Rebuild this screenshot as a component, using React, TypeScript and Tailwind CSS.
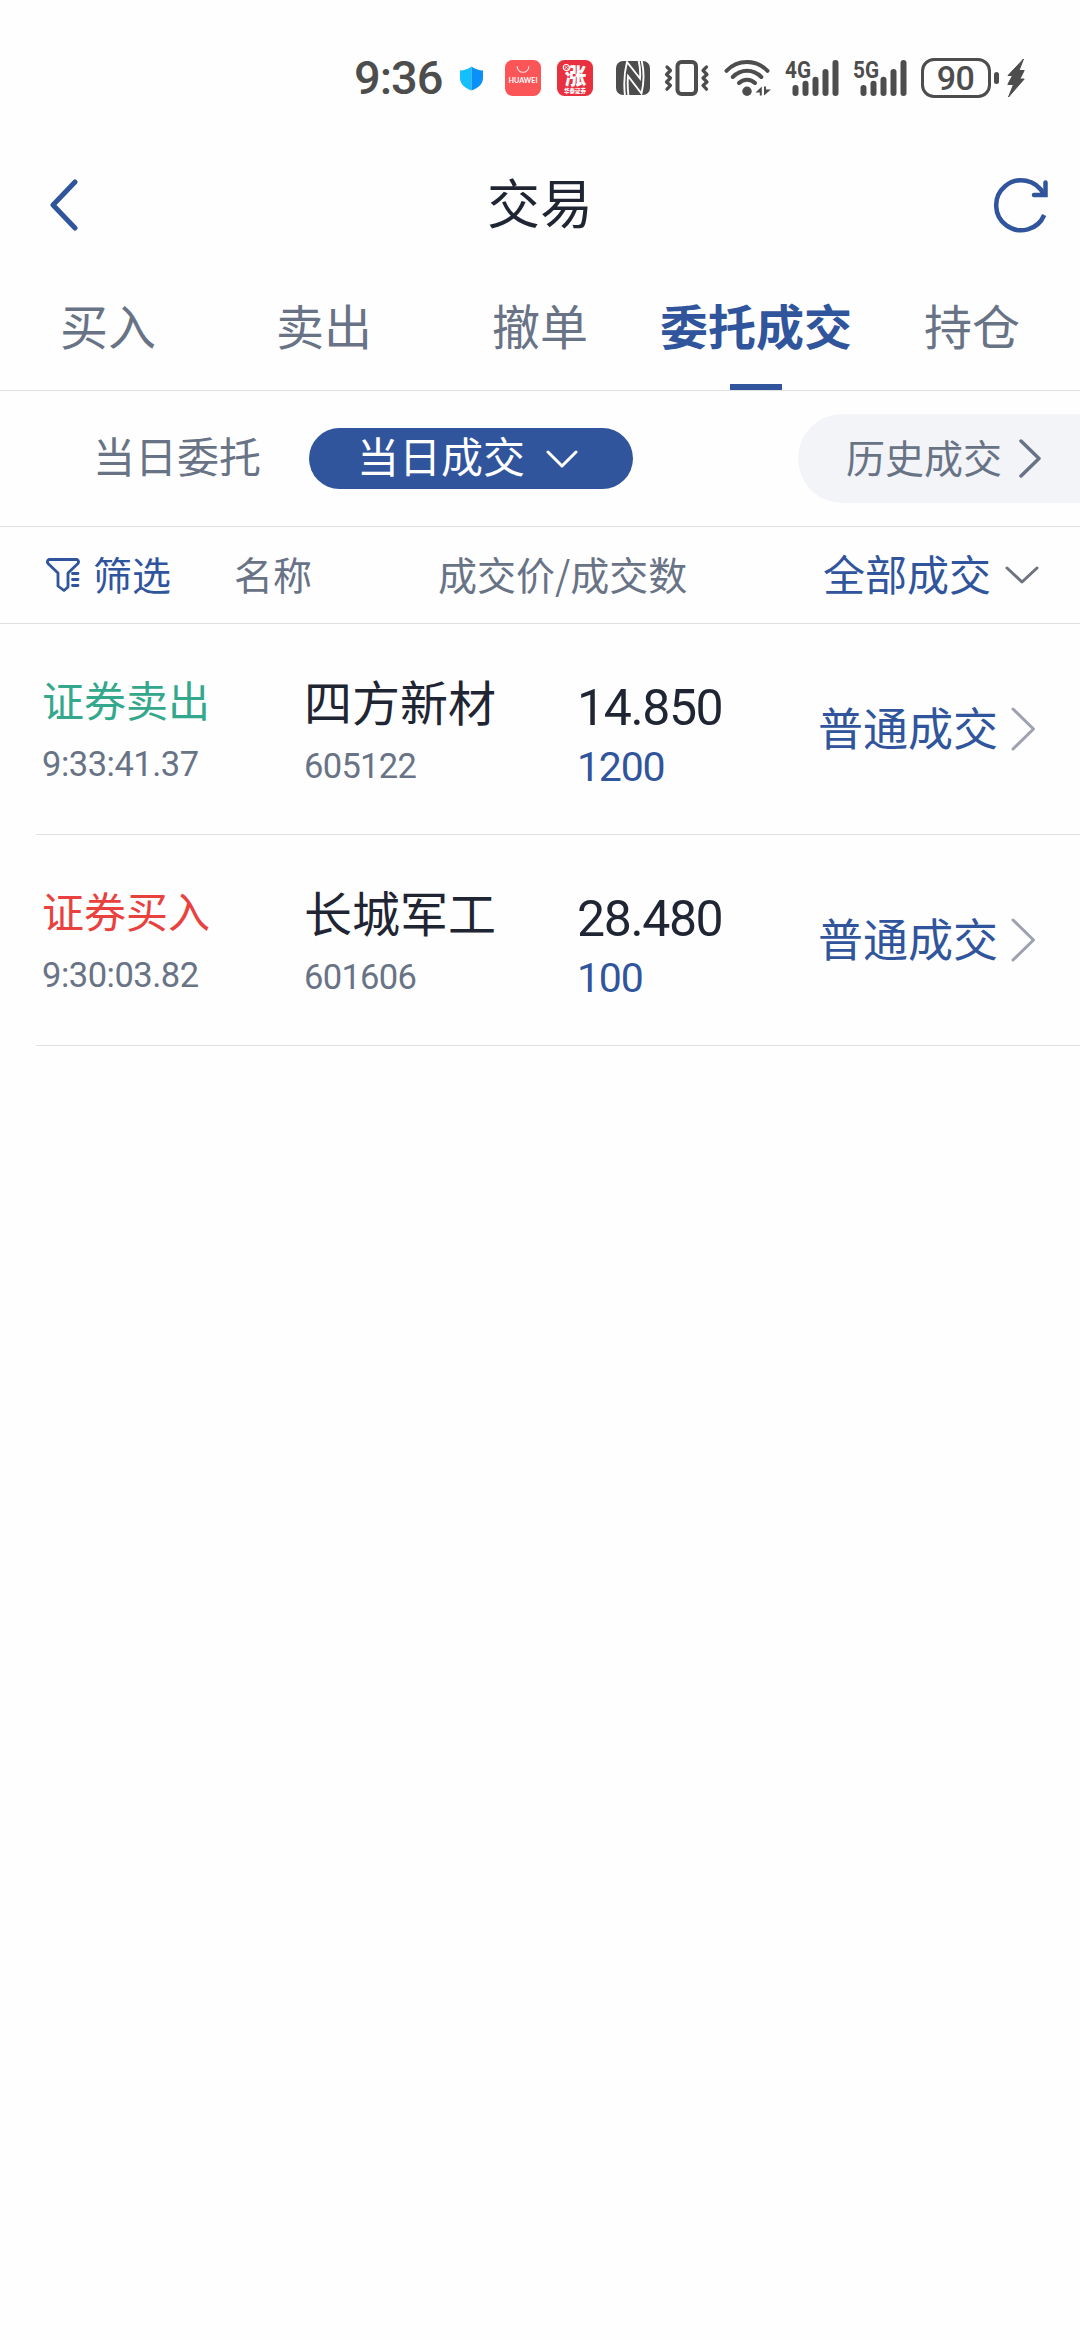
import React from "react";

const CJK = "font-['Noto_Sans_CJK_SC',sans-serif]";
const NUM = "font-['Roboto',sans-serif]";

type ChevronProps = {
  points: string;
  w: number;
  h: number;
  stroke: number;
  className: string;
};

function Chevron({ points, w, h, stroke, className }: ChevronProps) {
  return (
    <svg
      width={w}
      height={h}
      viewBox={`0 0 ${w} ${h}`}
      fill="none"
      stroke="currentColor"
      strokeWidth={stroke}
      strokeLinecap="round"
      strokeLinejoin="round"
      className={`shrink-0 ${className}`}
    >
      <polyline points={points} />
    </svg>
  );
}

function ShieldIcon() {
  return (
    <svg width="25" height="25" viewBox="0 0 25 25" className="ml-[18px] shrink-0">
      <path d="M12.500 0.500C9 3 5.500 4.200 1 4.600V12c0 6 4.500 9.800 11.500 12.500Z" fill="#14c0fb" />
      <path d="M12.500 0.500C16 3 19.500 4.200 24 4.600V12c0 6-4.500 9.800-11.500 12.500Z" fill="#0a90f8" />
    </svg>
  );
}

function HuaweiIcon() {
  return (
    <svg width="36" height="36" viewBox="0 0 36 36" className="ml-[21px] shrink-0">
      <rect width="36" height="36" rx="7.500" fill="#fb5558" />
      <path d="M12.200 6.500a5.800 5.800 0 0 0 11.600 0" fill="none" stroke="#ffe3e0" strokeWidth="1.100" strokeLinecap="round" />
      <text x="18" y="23.200" textAnchor="middle" textLength="29" lengthAdjust="spacingAndGlyphs" fontFamily="Lato, sans-serif" fontWeight="700" fontSize="7" fill="#fff">
        HUAWEI
      </text>
    </svg>
  );
}

function StockIcon() {
  return (
    <svg width="36" height="36" viewBox="0 0 36 36" className="ml-4 shrink-0 overflow-visible">
      <rect width="36" height="36" rx="7.500" fill="#e9303f" />
      <text x="18.500" y="23.500" textAnchor="middle" fontFamily="Noto Sans CJK SC, sans-serif" fontWeight="900" fontSize="21.500" fill="#fff">
        涨
      </text>
      <circle cx="9.300" cy="7.500" r="3" fill="#e9303f" stroke="#fff" strokeWidth="1.200" />
      <path d="M8 6.200l2.600 2.600m0-2.600l-2.600 2.600" stroke="#fff" strokeWidth="0.900" />
      <text x="18" y="33" textAnchor="middle" fontFamily="Noto Sans CJK SC, sans-serif" fontWeight="900" fontSize="5.500" fill="#fff">
        华泰证券
      </text>
    </svg>
  );
}

function NfcIcon() {
  return (
    <svg width="34" height="34" viewBox="0 0 34 34" className="ml-[23px] shrink-0">
      <rect width="34" height="34" rx="7" fill="#4d4d4d" />
      <path d="M9 35C8 26 8 12 11 1L24 17.500C24.500 11 24 5 22.500 -1" fill="none" stroke="#fefefe" strokeWidth="1.900" />
      <path d="M12.500 35C11.500 27 11.500 21 12 15L25.500 32.500C28 22 28 9 25.500 -1" fill="none" stroke="#fefefe" strokeWidth="1.900" />
    </svg>
  );
}

function VibrateIcon() {
  return (
    <svg width="46" height="36" viewBox="0 0 46 36" fill="none" stroke="#4d4d4d" strokeLinecap="round" strokeLinejoin="round" className="ml-[14px] shrink-0">
      <rect x="13.500" y="2" width="18.500" height="32" rx="4" strokeWidth="4" />
      <path d="M3 7l3.500 3.500L2.500 14.500 6.500 18 2.500 22 6.500 25.500 3 29.200" strokeWidth="3.200" />
      <path d="M42.500 7L39 10.500l4 4-4 3.500 4 4-4 3.500 3.500 3.700" strokeWidth="3.200" />
    </svg>
  );
}

function WifiIcon() {
  return (
    <svg width="47" height="36" viewBox="0 0 47 36" fill="none" stroke="#4d4d4d" strokeLinecap="round" strokeWidth="4" className="ml-[13.500px] shrink-0">
      <path d="M2.500 10.800C14 -0.800 32 -0.800 43.500 10.800" />
      <path d="M8.800 17C17 8.800 29 8.800 37.300 17" />
      <path d="M15 23c4.500-4.500 11.500-4.500 16 0" />
      <circle cx="23" cy="31.300" r="4.700" fill="#4d4d4d" stroke="none" />
      <path d="M37.800 26.500V35.500H35.800V32.500H31.500ZM40 35.500V26.500H42V29.500H47Z" fill="#4d4d4d" stroke="none" />
    </svg>
  );
}

function SignalIcon({ label, className }: { label: string; className: string }) {
  return (
    <svg width="54" height="36" viewBox="0 0 54 36" fill="#4d4d4d" className={`shrink-0 overflow-visible ${className}`}>
      <text x="0" y="17.800" textLength="26" lengthAdjust="spacingAndGlyphs" fontFamily="Roboto, sans-serif" fontWeight="700" fontSize="24.500">
        {label}
      </text>
      <rect x="7.500" y="25" width="6" height="11" rx="3" />
      <rect x="17.500" y="20.800" width="6" height="15.200" rx="3" />
      <rect x="27.500" y="16.800" width="6" height="19.200" rx="3" />
      <rect x="37.500" y="9" width="6" height="27" rx="3" />
      <rect x="47.500" y="0" width="6" height="36" rx="3" />
    </svg>
  );
}

function StatusBar() {
  return (
    <div className="flex h-[156px] items-center pl-[354px] text-[#4d4d4d]">
      <span className={`${NUM} w-[87px] text-[47px] leading-[48px] font-medium tracking-[-1px] whitespace-nowrap`}>9:36</span>
      <ShieldIcon />
      <HuaweiIcon />
      <StockIcon />
      <NfcIcon />
      <VibrateIcon />
      <WifiIcon />
      <SignalIcon label="4G" className="ml-[14px]" />
      <SignalIcon label="5G" className="ml-[14px]" />
      <span className={`${NUM} ml-[14px] flex h-10 w-[70px] items-center justify-center rounded-[13px] border-3 border-[#4d4d4d] text-[34px] leading-none font-medium tracking-[-0.5px]`}>
        90
      </span>
      <span className="ml-[3px] h-3 w-[5px] rounded-full bg-[#4d4d4d]" />
      <svg width="18" height="40" viewBox="0 0 18 40" className="ml-2 shrink-0">
        <path
          d="M16.500 1L1 17.500H5.500L0.800 26.500H6.500L1.500 39L17.200 21H12.800L17.200 12.500H12Z"
          fill="#4d4d4d"
          stroke="#4d4d4d"
          strokeWidth="1"
          strokeLinejoin="round"
        />
      </svg>
    </div>
  );
}

function Header() {
  return (
    <header className="grid h-[97px] grid-cols-3 items-center text-[#30559c]">
      <div className="pl-[48px]">
        <Chevron w={30} h={52} stroke={5} points="27,3 5,26 27,49" className="" />
      </div>
      <h1 className={`${CJK} pb-[6px] text-center text-[53px] leading-none text-[#1f2533]`}>交易</h1>
      <div className="flex justify-end pr-[31px]">
        <svg width="56" height="56" viewBox="0 0 56 56" fill="none" stroke="currentColor" strokeWidth="4.500">
          <path d="M51.200 38A25 25 0 1 1 50.500 17" />
          <path d="M52.500 5.500V18H41" strokeLinecap="round" />
        </svg>
      </div>
    </header>
  );
}

const tabs = ["买入", "卖出", "撤单", "委托成交", "持仓"];

function Tabs() {
  return (
    <nav className={`${CJK} grid h-[138px] grid-cols-5 border-b border-[#e0e0e0] text-[48px] leading-none text-[#697386]`}>
      {tabs.map((tab) =>
        tab === "委托成交" ? (
          <div key={tab} className="flex flex-col items-center justify-between pt-[47px] font-bold whitespace-nowrap text-[#30559c]">
            {tab}
            <span className="h-[6px] w-[52px] bg-[#30559c]" />
          </div>
        ) : (
          <div key={tab} className="pt-[47px] text-center">
            {tab}
          </div>
        ),
      )}
    </nav>
  );
}

function RangeBar() {
  return (
    <div className={`${CJK} flex h-[136px] items-center border-b border-[#e0e0e0] text-[42px] leading-none`}>
      <span className="w-[309px] pb-[7px] pl-[93px] text-[#697386]">当日委托</span>
      <div className="flex h-[61px] w-[324px] items-center rounded-full bg-[#30559c] pl-[48px] text-white">
        <span className="pb-[7px]">当日成交</span>
        <Chevron w={32} h={18} stroke={3} points="2,2 16,16 30,2" className="ml-[21px]" />
      </div>
      <div className="ml-auto flex h-[89px] w-[282px] items-center rounded-l-full bg-[#f3f4f7] pl-[48px] text-[39px] text-[#697386]">
        <span className="pb-1">历史成交</span>
        <Chevron w={22} h={39} stroke={3.5} points="2,2 20,19.500 2,37" className="ml-[17px]" />
      </div>
    </div>
  );
}

function ColumnHeader() {
  return (
    <div className={`${CJK} flex h-[97px] items-center border-b border-[#e0e0e0] pl-[46px] text-[39px] leading-none text-[#697386]`}>
      <div className="flex w-[188px] items-center text-[#30559c]">
        <svg width="34" height="34" viewBox="0 0 34 34" fill="none" stroke="currentColor" strokeWidth="2.800" strokeLinecap="round" strokeLinejoin="round" className="shrink-0">
          <path d="M3 1.500H31Q33.500 3 32 5.500L22 15V29L18 32.500L12 28V15L2 5.500Q0.500 3 3 1.500Z" />
          <path d="M26.500 15.500H32M26.500 21.500H32M26.500 27.500H32" />
        </svg>
        <span className="ml-[13px] pb-1">筛选</span>
      </div>
      <span className="w-[204px] pb-1">名称</span>
      <span className="w-[385px] pb-1 whitespace-nowrap">成交价/成交数</span>
      <span className="pb-1 text-[42px] text-[#30559c]">全部成交</span>
      <Chevron w={34} h={19} stroke={3} points="2,2 17,16 32,2" className="ml-[14px] text-[#6f7280]" />
    </div>
  );
}

type Trade = {
  side: string;
  sell: boolean;
  time: string;
  name: string;
  code: string;
  price: string;
  qty: string;
};

const trades: Trade[] = [
  { side: "证券卖出", sell: true, time: "9:33:41.37", name: "四方新材", code: "605122", price: "14.850", qty: "1200" },
  { side: "证券买入", sell: false, time: "9:30:03.82", name: "长城军工", code: "601606", price: "28.480", qty: "100" },
];

function TradeRow({ trade }: { trade: Trade }) {
  return (
    <li className="ml-9 flex h-[211px] border-b border-[#e0e0e0] pl-[6px]">
      <div className="w-[262px] pt-[54px]">
        <div className={`${CJK} text-[42px] leading-none ${trade.sell ? "text-[#34a88d]" : "text-[#e8413e]"}`}>{trade.side}</div>
        <div className={`${NUM} mt-[26px] text-[34.500px] leading-9 tracking-[-0.500px] text-[#697386]`}>{trade.time}</div>
      </div>
      <div className="w-[273px] pt-[52px]">
        <div className={`${CJK} text-[48px] leading-none text-[#1f2533]`}>{trade.name}</div>
        <div className={`${NUM} mt-[24px] text-[34.500px] leading-9 tracking-[-0.700px] text-[#697386]`}>{trade.code}</div>
      </div>
      <div className="w-[241px] pt-[59px]">
        <div className={`${NUM} text-[50px] leading-[50px] tracking-[-1.400px] text-[#1f2533]`}>{trade.price}</div>
        <div className={`${NUM} mt-[13px] text-[41px] leading-[42px] tracking-[-1.200px] text-[#30559c]`}>{trade.qty}</div>
      </div>
      <div className="flex items-center text-[#30559c]">
        <span className={`${CJK} pb-[5px] text-[45px] leading-none`}>普通成交</span>
        <Chevron w={25} h={44} stroke={3} points="2,2 22.500,22 2,42" className="ml-[13px] text-[#9ea2b0]" />
      </div>
    </li>
  );
}

export default function App() {
  return (
    <div className="h-[2340px] w-[1080px] overflow-hidden bg-[#fefefe]">
      <StatusBar />
      <Header />
      <Tabs />
      <RangeBar />
      <ColumnHeader />
      <ul>
        {trades.map((t) => (
          <TradeRow key={t.code} trade={t} />
        ))}
      </ul>
    </div>
  );
}
